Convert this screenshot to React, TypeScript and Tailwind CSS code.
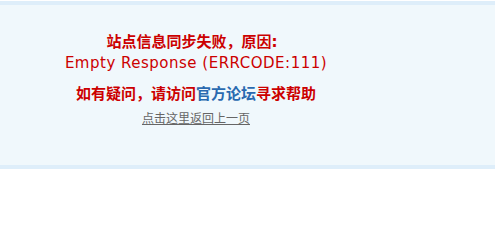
export default function App() {
  return (
    <div className="min-h-screen bg-white pt-px font-['DejaVu_Sans','Noto_Sans_CJK_SC',sans-serif]">
      <div className="h-[168px] border-y-4 border-[#deeefa] bg-[#f0f8fc]">
        <div className="w-[392px] pt-[28px] text-center">
          <p className="pr-[8px] text-[15px] leading-[19px] font-bold text-[#cc0000]">
            站点信息同步失败，原因:
          </p>
          <p className="mt-[2px] text-[15px] leading-[19px] tracking-[0.5px] text-[#cc0000]">
            Empty Response (ERRCODE:111)
          </p>
          <p className="mt-[12px] text-[15px] leading-[19px] font-bold text-[#cc0000]">
            如有疑问，请访问
            <a href="#" className="text-[#2a6ab0]">
              官方论坛
            </a>
            寻求帮助
          </p>
          <p className="mt-[6px] text-xs leading-[19px]">
            <a href="#" className="text-[#666666] underline">
              点击这里返回上一页
            </a>
          </p>
        </div>
      </div>
    </div>
  );
}
